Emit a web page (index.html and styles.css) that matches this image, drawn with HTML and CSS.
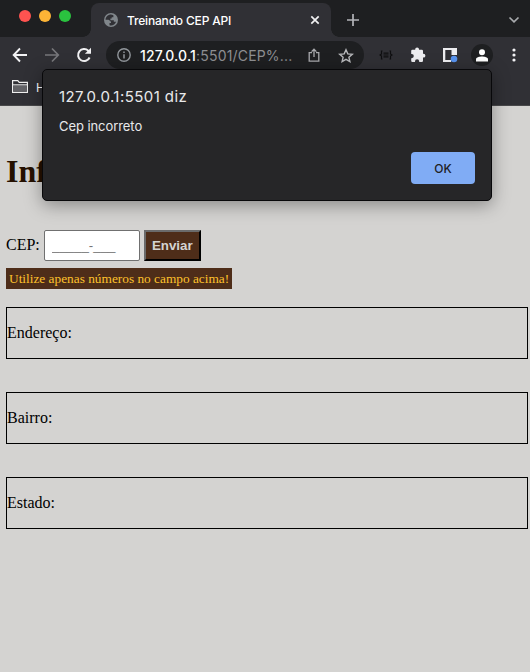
FILE: index.html
```html
<!DOCTYPE html>
<html lang="pt-BR">
<head>
<meta charset="utf-8">
<title>Treinando CEP API</title>
<link rel="stylesheet" href="styles.css">
</head>
<body>
<div class="browser">
  <header class="tabstrip">
    <div class="lights"><i class="red"></i><i class="yellow"></i><i class="green"></i></div>
    <div class="tab">
      <svg class="globe" width="14" height="14" viewBox="0 0 14 14"><circle cx="7" cy="7" r="7" fill="#80868b"/><path d="M5.4 1.8C2.9 2.5 1.5 4.6 1.5 6.8h2.7c1.5 0 1.4 1.7 2.8 1.7v1.4H5.5v2.4c2.8.7 5.7-.8 6.6-3.6H9.8V7.2H6.4V5.5h1.3V4.2h1.7V2.3C8 1.6 6.700 1.400 5.400 1.800z" fill="#303035"/></svg>
      <span class="tab-title">Treinando CEP API</span>
      <svg class="close" width="10" height="10" viewBox="0 0 10 10"><path d="M1.300 1.300l7.400 7.400M8.700 1.300L1.300 8.700" stroke="#f1f1f3" stroke-width="1.700"/></svg>
    </div>
    <svg class="plus" width="12" height="12" viewBox="0 0 12 12"><path d="M6 0v12M0 6h12" stroke="#b4b5b9" stroke-width="1.700"/></svg>
    <svg class="chevron" width="12" height="8" viewBox="0 0 12 8"><path d="M1.500 1.500L6 5.900l4.500-4.400" fill="none" stroke="#a9abae" stroke-width="1.700"/></svg>
  </header>
  <nav class="toolbar">
    <svg class="back" width="16" height="16" viewBox="0 0 16 16"><path d="M15 8H2M8 1.500L1.700 8 8 14.500" fill="none" stroke="#f2f2f4" stroke-width="1.900"/></svg>
    <svg class="forward" width="16" height="16" viewBox="0 0 16 16"><path d="M1 8h13M8 1.500L14.300 8 8 14.500" fill="none" stroke="#77777b" stroke-width="1.700"/></svg>
    <svg class="reload" width="16" height="16" viewBox="0 0 16 16"><path d="M13.600 10.500A6 6 0 1 1 12.300 3.800L14 5.500" fill="none" stroke="#f2f2f4" stroke-width="2"/><path d="M15 .7v6.100H8.900z" fill="#f2f2f4"/></svg>
    <div class="omnibox">
      <svg class="info" width="14" height="14" viewBox="0 0 14 14"><circle cx="7" cy="7" r="6.200" fill="none" stroke="#92979c" stroke-width="1.400"/><path d="M7 6.200v4.300M7 3.500v1.500" stroke="#92979c" stroke-width="1.500"/></svg>
      <span class="url"><b>127.0.0.1</b>:5501/CEP%...</span>
      <svg class="share" width="12" height="14" viewBox="0 0 12 14"><path d="M4 4.600H1.200v8.500h9.600V4.600H8M6 9V1.300M3.600 3.600L6 1.200l2.400 2.400" fill="none" stroke="#a9aaad" stroke-width="1.300"/></svg>
      <svg class="star" width="16" height="15" viewBox="0 0 16 15"><path d="M8 1.800l1.800 4.100 4.500.4-3.400 3 1 4.300L8 11.300l-3.900 2.300 1-4.300-3.400-3 4.500-.4z" fill="none" stroke="#b7b8bb" stroke-width="1.400"/></svg>
    </div>
    <svg class="braces" width="14" height="10" viewBox="0 0 14 10"><path d="M3.500 1H2.500v3L1 5l1.500 1v3h1M10.500 1h1v3L13 5l-1.500 1v3h-1M4.500 3.200h5M4.500 5h5M4.500 6.800h5" fill="none" stroke="#0f0f11" stroke-width="1.200"/></svg>
    <svg class="puzzle" width="16" height="16" viewBox="0 0 16 16"><path d="M1.200 4q0-1.200 1.200-1.200H5.200V2.300a1.900 1.900 0 0 1 3.800 0v.5h2.800Q13 2.800 13 4v2.800h.5a1.900 1.900 0 0 1 0 3.800H13v3.200q0 1.200-1.200 1.200H9.200v-.6a2.100 2.100 0 0 0-4.200 0v.6H2.400q-1.200 0-1.200-1.200v-2.600h.5a2.100 2.100 0 0 0 0-4.200h-.5z" fill="#ededf0"/></svg>
    <svg class="panel" width="16" height="16" viewBox="0 0 16 16"><path d="M0 1h14v14H0z" fill="#ededf0"/><path d="M2.300 3h6.200v10H2.300zM8.500 8H14v7H8z" fill="#303035"/><circle cx="11" cy="12" r="3.300" fill="#5793ef"/></svg>
    <div class="avatar"><svg width="12" height="13" viewBox="0 0 12 13"><circle cx="6" cy="3.200" r="3" fill="#fff"/><path d="M0 12.500v-2.200C0 8.300 3.500 7.500 6 7.500s6 .8 6 2.800v2.200z" fill="#fff"/></svg></div>
    <svg class="dots" width="4" height="14" viewBox="0 0 4 14"><g fill="#f2f2f4"><circle cx="2" cy="2" r="1.600"/><circle cx="2" cy="7" r="1.600"/><circle cx="2" cy="12" r="1.600"/></g></svg>
  </nav>
  <div class="bookmarks">
    <svg width="16" height="14" viewBox="0 0 16 14"><path d="M.6 12.400V.7h5.200l1.400 1.700h8.200v10z" fill="#303035" stroke="#eee" stroke-width="1.200"/><path d="M1.200 5.300h13.600v6.500H1.200z" fill="#626266"/><path d="M.6 4.800h14.800" stroke="#eee"/></svg>
    <span>H</span>
  </div>
</div>
<main class="page">
  <h1>Inf</h1>
  <form class="cep">
    <label for="cep">CEP:</label>
    <input id="cep" placeholder="_____-___">
    <button type="button">Enviar</button>
  </form>
  <p class="hint">Utilize apenas números no campo acima!</p>
  <section class="field">Endereço:</section>
  <section class="field">Bairro:</section>
  <section class="field">Estado:</section>
</main>
<div class="dialog" role="alertdialog">
  <h2>127.0.0.1:5501 diz</h2>
  <p>Cep incorreto</p>
  <button type="button">OK</button>
</div>
</body>
</html>
```
FILE: styles.css
```css
* { box-sizing: border-box; }
body { margin: 0; height: 672px; overflow: hidden; background: #d4d3d1; font-family: "Liberation Serif", serif; font-size: 16px; color: #000; }
svg { display: block; flex: none; }
.browser { font-family: Inter, sans-serif; color: #fff; background: #303035; height: 106px; border-bottom: 1px solid #48484a; }
.tabstrip { height: 37px; background: #1e1f21; display: flex; }
.lights { display: flex; gap: 8px; padding: 10px 0 0 19px; width: 91px; flex: none; }
.lights i { width: 12px; height: 12px; border-radius: 50%; }
.red { background: #ff5350; }
.yellow { background: #fdb436; }
.green { background: #2ac23f; }
.tab { position: relative; width: 240px; height: 34px; margin-top: 3px; border-radius: 8px 8px 0 0; background: #303035; display: flex; align-items: center; padding: 0 11px 0 13px; }
.tab::before, .tab::after { content: ""; position: absolute; bottom: 0; width: 8px; height: 8px; }
.tab::before { left: -8px; background: radial-gradient(circle at 0 0, #1e1f21 7.5px, #303035 8px); }
.tab::after { right: -8px; background: radial-gradient(circle at 100% 0, #1e1f21 7.5px, #303035 8px); }
.tab-title { margin-left: 9px; font-size: 12px; font-weight: 500; white-space: nowrap; letter-spacing: -.18px; }
.close { margin-left: auto; }
.plus { margin: 14px 0 0 16px; }
.chevron { margin: 16px 10px 0 auto; }
.toolbar { height: 36px; display: flex; align-items: center; }
.back { margin-left: 12px; }
.forward { margin-left: 16px; }
.reload { margin-left: 16px; }
.omnibox { width: 258px; height: 28px; margin-left: 14px; border-radius: 14px; background: #1e1f21; display: flex; align-items: center; padding-left: 11px; }
.url { width: 154px; margin-left: 9px; font-size: 14px; color: #8d8e91; white-space: nowrap; letter-spacing: .17px; }
.url b { font-weight: 500; color: #fff; }
.share { margin-left: 14px; }
.star { margin-left: 18px; }
.braces { margin-left: 15px; }
.puzzle { margin-left: 17px; }
.panel { margin-left: 17px; }
.avatar { width: 22px; height: 22px; margin-left: 12px; border-radius: 50%; background: #1e1f21; display: flex; align-items: center; justify-content: center; flex: none; }
.dots { margin-left: 19px; }
.bookmarks { display: flex; align-items: center; gap: 8px; height: 28px; padding-left: 12px; font-size: 12px; }
.page { padding: 47px 2px 0 6px; }
h1 { margin: 0; font-size: 32px; line-height: 37px; color: #251000; }
.cep { display: flex; align-items: center; height: 31px; margin-top: 40px; }
.cep label { line-height: 29px; height: 31px; }
.cep input { width: 96px; height: 31px; margin-left: 4px; padding: 1px 7px; border: 1px solid #707070; border-radius: 2px; background: #fff; font: 13.33px "Liberation Sans", sans-serif; }
.cep input::placeholder { color: #757575; }
.cep button { width: 57px; height: 31px; margin-left: 4px; padding: 0; border: 2px outset #6b6b6b; border-color: #6b6b6b #292929 #292929 #6b6b6b; background: #4e2d19; color: #d4d3d1; font: bold 13.33px "Liberation Sans", sans-serif; }
.hint { width: 226px; height: 21px; margin: 7px 0 18px; padding-left: 3px; background: #4e2d19; color: #fec22c; font-size: 13.33px; line-height: 21px; white-space: nowrap; }
.field { height: 52px; margin-bottom: 33px; border: 1px solid #000; line-height: 50px; }
.dialog { position: absolute; left: 42px; top: 69px; width: 450px; height: 132px; padding: 0 16px; border: 1px solid #08080a; border-radius: 5px; background: #262628; color: #e8e9eb; font-family: Inter, sans-serif; box-shadow: 0 4px 18px rgba(0,0,0,.36); display: flex; flex-direction: column; }
.dialog h2 { margin: 17px 0 0; font-size: 15px; line-height: 20px; font-weight: 400; letter-spacing: .43px; }
.dialog p { margin: 10px 0 0; font-size: 13px; line-height: 18px; letter-spacing: -.07px; }
.dialog button { width: 64px; height: 32px; margin: 17px 0 0 auto; padding: 0; border: 0; border-radius: 4px; background: #80acf5; color: #202124; font: 500 12px Inter, sans-serif; }
```
